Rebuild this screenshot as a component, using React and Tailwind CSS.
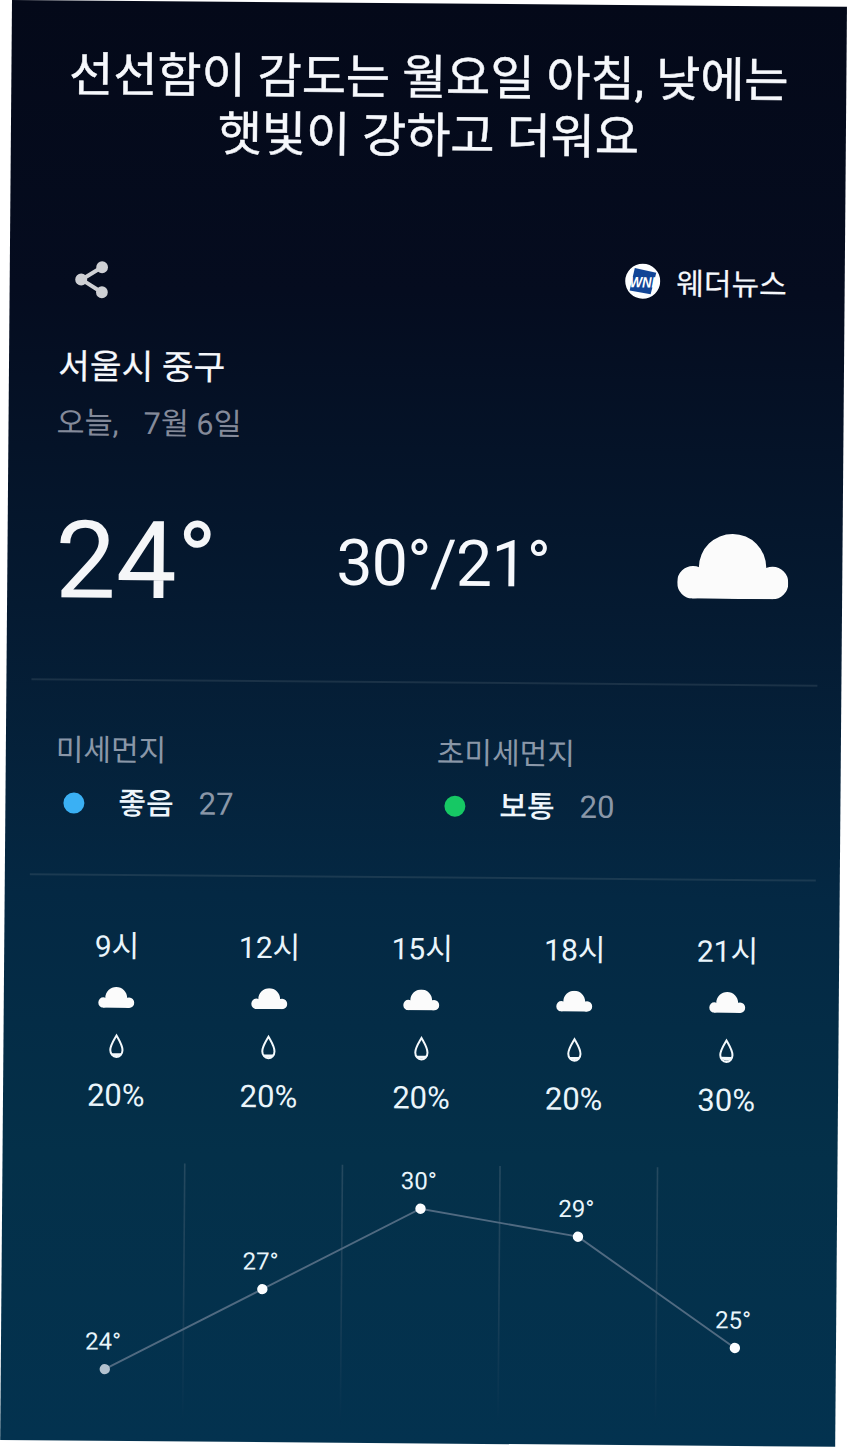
const HOURS = [
  { hour: "9시", rain: 20 },
  { hour: "12시", rain: 20 },
  { hour: "15시", rain: 20 },
  { hour: "18시", rain: 20 },
  { hour: "21시", rain: 30 },
];

const POINTS = [
  { x: 104, y: 208.3, t: 24 },
  { x: 260.9, y: 127, t: 27 },
  { x: 418.4, y: 45.3, t: 30 },
  { x: 576.1, y: 72, t: 29 },
  { x: 733.9, y: 182, t: 25 },
];

function Cloud({ className }) {
  return (
    <svg viewBox="0 0 111 65" className={className} fill="#fbfbfb">
      <path d="M21.500 34V33.700a33.700 33.700 0 0 1 67.400 0V60h-67.400z" />
      <rect x="0" y="32.500" width="31.500" height="32.500" rx="15.700" />
      <rect x="79.500" y="32.500" width="31.500" height="32.500" rx="15.700" />
      <rect x="15" y="45" width="81" height="20" />
    </svg>
  );
}

function Drop({ level }) {
  return (
    <svg viewBox="0 0 16 26" className="h-[26px] w-4">
      <path
        d="M8 2.600C5.600 7 1.900 12.200 1.900 17.200A6.100 6.900 0 0 0 14.100 17.200C14.100 12.200 10.400 7 8 2.600z"
        fill="none"
        stroke="#f4f9fc"
        strokeWidth="2"
      />
      <path
        d={level > 20 ? "M2.300 19h11.400a6 5.500 0 0 1-11.400 0z" : "M2.700 20.300h10.600a5.800 5 0 0 1-10.600 0z"}
        fill="#f4f9fc"
      />
    </svg>
  );
}

function Dust({ label, dot, grade, value }) {
  return (
    <div className="w-[381px]">
      <div className="h-[44px] text-[30px] leading-[44px] text-[#8a97a8]">{label}</div>
      <div className="mt-[8px] flex h-[44px] items-center text-[30px] leading-[44px]">
        <span className={"ml-[8px] size-[21px] rounded-full " + dot} />
        <span className="mt-[2px] ml-[34px] font-medium text-[#eef6fc]">{grade}</span>
        <span className="mt-[2px] ml-[25px] text-[31px] text-[#8a97a8]">{value}</span>
      </div>
    </div>
  );
}

export default function App() {
  return (
    <div className="h-[1447px] w-[847px] overflow-hidden bg-white pl-[12px]">
      <main
        className="flex h-[1440px] w-[835px] origin-top-left rotate-[0.47deg] flex-col bg-[linear-gradient(to_bottom,#040919_0%,#050c1f_20%,#051a31_42%,#042843_62%,#043049_80%,#03324f_100%)] text-[#f6f8fc]"
        style={{ fontFamily: 'Roboto, "Noto Sans CJK KR", sans-serif' }}
      >
        <h1 className="mt-[46px] text-center text-[48px] leading-[58px] font-normal [-webkit-text-stroke:0.5px]">
          선선함이 감도는 월요일 아침, 낮에는
          <br />
          햇빛이 강하고 더워요
        </h1>

        <div className="mt-[87px] flex h-[60px] items-center justify-between pr-[58px] pl-[63.500px]">
          <svg viewBox="0 0 36 40" className="h-[40px] w-[36px]" fill="#cfd0d4" stroke="#cfd0d4">
            <path d="M28 7.500 8 20l20 12.500" fill="none" strokeWidth="4" />
            <circle cx="28.300" cy="7.500" r="5.900" stroke="none" />
            <circle cx="7.500" cy="20" r="6" stroke="none" />
            <circle cx="28.300" cy="32.500" r="5.900" stroke="none" />
          </svg>
          <div className="flex items-center">
            <svg viewBox="0 0 36 36" className="size-[36px] -translate-y-[3px]">
              <circle cx="18" cy="18" r="17.500" fill="#fdfeff" />
              <path d="M10 5 31.500 9.500 26 31 5 27.500z" fill="#124596" />
              <text x="17.800" y="24.300" textAnchor="middle" fontSize="15" fontStyle="italic" fontWeight="700" fill="#fff" fontFamily="Liberation Sans" textLength="25.500" lengthAdjust="spacingAndGlyphs">
                WNI
              </text>
            </svg>
            <span className="ml-[16px] text-[30px] leading-[44px] [-webkit-text-stroke:0.2px]">웨더뉴스</span>
          </div>
        </div>

        <div className="mt-[32px] ml-[49px] text-[34.500px] leading-[50px] [-webkit-text-stroke:0.2px]">서울시 중구</div>
        <div className="mt-[10px] ml-[48px] h-[44px] text-[30.500px] leading-[44px] text-[#848a9a]">
          오늘,<span className="ml-[25px]">7월 6일</span>
        </div>

        <div className="mt-[55px] flex h-[120px] items-center pl-[48px]">
          <div className="w-[281px] text-[108px] leading-[120px] text-[#f5f6f8]">24°</div>
          <div className="w-[341px] text-[64.500px] leading-[76px] tracking-[-0.900px]">30°/21°</div>
          <Cloud className="h-[65px] w-[111px]" />
        </div>

        <div className="mt-[58px] ml-[25px] h-[2px] w-[786px] shrink-0 bg-[#1b3247]" />

        <div className="mt-[48px] flex h-[96px] pl-[50px]">
          <Dust label="미세먼지" dot="bg-[#3ab0f4]" grade="좋음" value="27" />
          <Dust label="초미세먼지" dot="bg-[#16c864]" grade="보통" value="20" />
        </div>

        <div className="mt-[49px] ml-[25px] h-[2px] w-[786px] shrink-0 bg-[#1b3a51]" />

        <div className="mt-[49px] ml-[36.500px] grid w-[763px] grid-cols-5 justify-items-center">
          {HOURS.map(({ hour, rain }) => (
            <div key={hour} className="flex flex-col items-center text-[30px] leading-[44px] text-[#eaf5fb]">
              <span>{hour}</span>
              <Cloud className="mt-[18px] h-[21px] w-[37px]" />
              <div className="mt-[25px] h-[26px]">
                <Drop level={rain} />
              </div>
              <span className="mt-[15px] text-[31px]">{rain}%</span>
            </div>
          ))}
        </div>

        <svg viewBox="0 0 835 270" className="mt-[42.500px] h-[270px] w-[835px] shrink-0">
          <defs>
            <linearGradient id="rule" x1="0" y1="0" x2="0" y2="260" gradientUnits="userSpaceOnUse">
              <stop offset="0" stopColor="#25495f" />
              <stop offset="0.500" stopColor="#1c4159" />
              <stop offset="1" stopColor="#03314e" />
            </linearGradient>
          </defs>
          {[181.500, 339.200, 496.800, 654.300].map((x) => (
            <rect key={x} x={x} y="2" width="1.600" height="258" fill="url(#rule)" />
          ))}
          <polyline points={POINTS.map((p) => p.x + "," + p.y).join(" ")} fill="none" stroke="#506a81" strokeWidth="1.900" />
          {POINTS.map((p, i) => (
            <g key={p.t}>
              <circle cx={p.x} cy={p.y} r="5.200" fill={i === 0 ? "#b3c2cf" : "#fbfdff"} />
              <text x={p.x - 2} y={p.y - 19.500} textAnchor="middle" fontSize="24" fill="#e8f5fb">
                {p.t}°
              </text>
            </g>
          ))}
        </svg>
      </main>
    </div>
  );
}
